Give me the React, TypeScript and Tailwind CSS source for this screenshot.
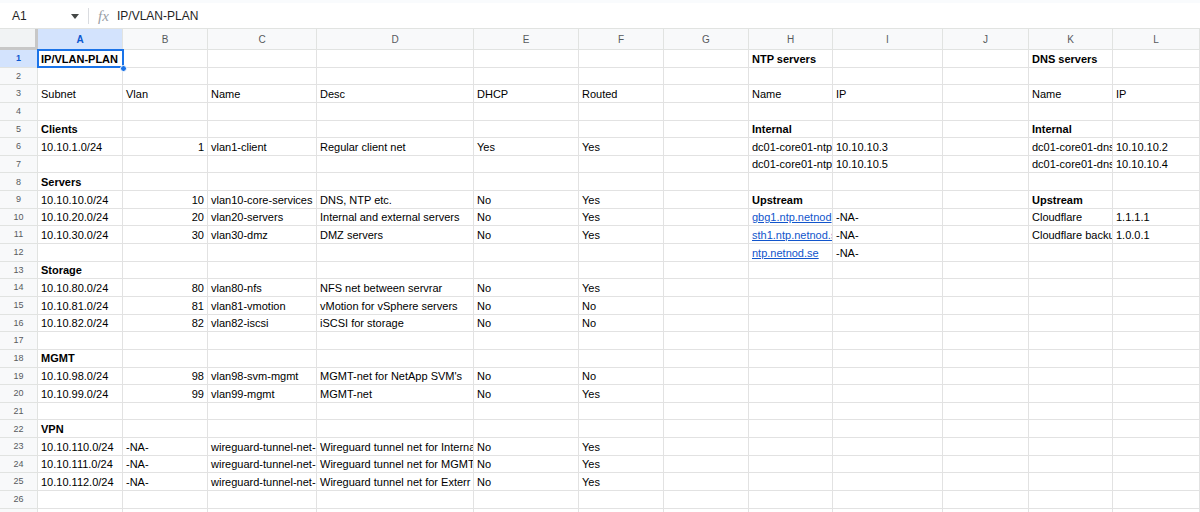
import React from 'react';

type Cell = { t: string; b?: boolean; r?: boolean; link?: boolean };

const COLS = ['A', 'B', 'C', 'D', 'E', 'F', 'G', 'H', 'I', 'J', 'K', 'L'];

// rows keyed by row number, columns keyed by letter
// clipped cells only hold the part that is visible in the sheet
const DATA: Record<number, Record<string, Cell>> = {
  1: { A: { t: 'IP/VLAN-PLAN', b: true }, H: { t: 'NTP servers', b: true }, K: { t: 'DNS servers', b: true } },
  3: {
    A: { t: 'Subnet' }, B: { t: 'Vlan' }, C: { t: 'Name' }, D: { t: 'Desc' }, E: { t: 'DHCP' }, F: { t: 'Routed' },
    H: { t: 'Name' }, I: { t: 'IP' }, K: { t: 'Name' }, L: { t: 'IP' },
  },
  5: { A: { t: 'Clients', b: true }, H: { t: 'Internal', b: true }, K: { t: 'Internal', b: true } },
  6: {
    A: { t: '10.10.1.0/24' }, B: { t: '1', r: true }, C: { t: 'vlan1-client' }, D: { t: 'Regular client net' },
    E: { t: 'Yes' }, F: { t: 'Yes' },
    H: { t: 'dc01-core01-ntp' }, I: { t: '10.10.10.3' }, K: { t: 'dc01-core01-dns' }, L: { t: '10.10.10.2' },
  },
  7: { H: { t: 'dc01-core01-ntp' }, I: { t: '10.10.10.5' }, K: { t: 'dc01-core01-dns' }, L: { t: '10.10.10.4' } },
  8: { A: { t: 'Servers', b: true } },
  9: {
    A: { t: '10.10.10.0/24' }, B: { t: '10', r: true }, C: { t: 'vlan10-core-services' }, D: { t: 'DNS, NTP etc.' },
    E: { t: 'No' }, F: { t: 'Yes' }, H: { t: 'Upstream', b: true }, K: { t: 'Upstream', b: true },
  },
  10: {
    A: { t: '10.10.20.0/24' }, B: { t: '20', r: true }, C: { t: 'vlan20-servers' }, D: { t: 'Internal and external servers' },
    E: { t: 'No' }, F: { t: 'Yes' },
    H: { t: 'gbg1.ntp.netnod', link: true }, I: { t: '-NA-' }, K: { t: 'Cloudflare' }, L: { t: '1.1.1.1' },
  },
  11: {
    A: { t: '10.10.30.0/24' }, B: { t: '30', r: true }, C: { t: 'vlan30-dmz' }, D: { t: 'DMZ servers' },
    E: { t: 'No' }, F: { t: 'Yes' },
    H: { t: 'sth1.ntp.netnod.s', link: true }, I: { t: '-NA-' }, K: { t: 'Cloudflare backu' }, L: { t: '1.0.0.1' },
  },
  12: { H: { t: 'ntp.netnod.se', link: true }, I: { t: '-NA-' } },
  13: { A: { t: 'Storage', b: true } },
  14: {
    A: { t: '10.10.80.0/24' }, B: { t: '80', r: true }, C: { t: 'vlan80-nfs' }, D: { t: 'NFS net between servrar' },
    E: { t: 'No' }, F: { t: 'Yes' },
  },
  15: {
    A: { t: '10.10.81.0/24' }, B: { t: '81', r: true }, C: { t: 'vlan81-vmotion' }, D: { t: 'vMotion for vSphere servers' },
    E: { t: 'No' }, F: { t: 'No' },
  },
  16: {
    A: { t: '10.10.82.0/24' }, B: { t: '82', r: true }, C: { t: 'vlan82-iscsi' }, D: { t: 'iSCSI for storage' },
    E: { t: 'No' }, F: { t: 'No' },
  },
  18: { A: { t: 'MGMT', b: true } },
  19: {
    A: { t: '10.10.98.0/24' }, B: { t: '98', r: true }, C: { t: 'vlan98-svm-mgmt' }, D: { t: "MGMT-net for NetApp SVM's" },
    E: { t: 'No' }, F: { t: 'No' },
  },
  20: {
    A: { t: '10.10.99.0/24' }, B: { t: '99', r: true }, C: { t: 'vlan99-mgmt' }, D: { t: 'MGMT-net' },
    E: { t: 'No' }, F: { t: 'Yes' },
  },
  22: { A: { t: 'VPN', b: true } },
  23: {
    A: { t: '10.10.110.0/24' }, B: { t: '-NA-' }, C: { t: 'wireguard-tunnel-net-' },
    D: { t: 'Wireguard tunnel net for Interna' }, E: { t: 'No' }, F: { t: 'Yes' },
  },
  24: {
    A: { t: '10.10.111.0/24' }, B: { t: '-NA-' }, C: { t: 'wireguard-tunnel-net-' },
    D: { t: 'Wireguard tunnel net for MGMT' }, E: { t: 'No' }, F: { t: 'Yes' },
  },
  25: {
    A: { t: '10.10.112.0/24' }, B: { t: '-NA-' }, C: { t: 'wireguard-tunnel-net-' },
    D: { t: 'Wireguard tunnel net for Exterr' }, E: { t: 'No' }, F: { t: 'Yes' },
  },
};

const ROWS = Array.from({ length: 27 }, (_, i) => i + 1);

const gridCols = 'grid grid-cols-[38px_85px_85px_109px_157px_105px_85px_85px_84px_110px_86px_84px_87px]';

const App = () => {
  return (
    <div className="w-[1200px] h-[512px] overflow-hidden bg-white font-['Liberation_Sans',Arial,sans-serif] text-black">
      {/* formula bar */}
      <div className="h-[3px] bg-[#f9fbfd]" />
      <div className="h-[26px] flex items-center border-b border-[#e1e3e1] text-[12px] pt-px">
        <div className="w-[88px] flex items-center justify-between pl-[12px] pr-[9px]">
          <span className="text-[#1f1f1f]">A1</span>
          <svg width="8" height="5" viewBox="0 0 8 5" className="mt-[1px]">
            <path d="M0 0h8L4 5z" fill="#444746" />
          </svg>
        </div>
        <div className="w-px h-[16px] bg-[#dadce0]" />
        <span className="ml-[9px] w-[19px] text-[#9aa0a6] italic font-['Liberation_Serif',serif] text-[15px] leading-none">fx</span>
        <span className="text-[#1f1f1f]">IP/VLAN-PLAN</span>
      </div>

      {/* column headers */}
      <div className={`${gridCols} h-[21px] text-[10px] text-[#575a5d] bg-[#f8f9fa]`}>
        <div className="bg-[#f1f3f4] border-r-[3px] border-b-[3px] border-[#c7c7c7]" />
        {COLS.map((c) => (
          <div
            key={c}
            className={`flex items-center justify-center border-r border-b border-[#e1e3e1] ${
              c === 'A' ? 'bg-[#d3e3fd] text-[#0b57d0] font-bold' : ''
            }`}
          >
            {c}
          </div>
        ))}
      </div>

      {/* rows */}
      <div className="relative">
        {ROWS.map((r) => (
          <div key={r} className={`${gridCols} h-[17.65px] text-[11px]`}>
            <div
              className={`flex items-center justify-center pt-px text-[9px] border-r border-b border-[#e1e3e1] ${
                r === 1 ? 'bg-[#d3e3fd] text-[#0b57d0] font-bold' : 'bg-[#f8f9fa] text-[#575a5d]'
              }`}
            >
              {r}
            </div>
            {COLS.map((c) => {
              const cell = DATA[r]?.[c];
              return (
                <div
                  key={c}
                  className={`flex items-center overflow-hidden whitespace-nowrap border-r border-b border-[#e2e2e2] pl-[3px] pr-[3px] pt-px ${
                    cell?.r ? 'justify-end' : ''
                  }`}
                >
                  {cell && (
                    <span
                      className={`${cell.b ? 'font-bold' : ''} ${cell.link ? 'text-[#1155cc] underline' : ''}`}
                    >
                      {cell.t}
                    </span>
                  )}
                </div>
              );
            })}
          </div>
        ))}
        {/* selected cell A1 */}
        <div className="absolute left-[37px] top-[-1px] w-[87px] h-[19px] border-2 border-[#1a73e8] pointer-events-none" />
        <div className="absolute left-[120px] top-[15px] w-[7px] h-[7px] rounded-full bg-[#1a73e8] border border-white pointer-events-none" />
      </div>
    </div>
  );
};

export default App;
